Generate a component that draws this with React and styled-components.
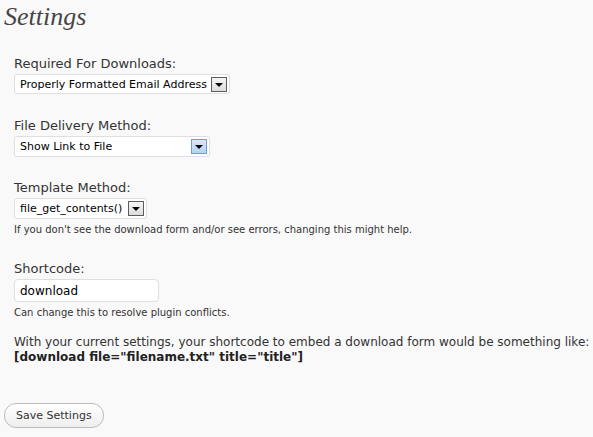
import React from "react";
import styled, { createGlobalStyle } from "styled-components";

const Global = createGlobalStyle`
html, body {
  margin: 0;
  background: #f9f9f9;
}
body {
  font-family: "DejaVu Sans", Verdana, sans-serif;
  color: #333;
}
`

const Page = styled.div`
padding: 0 4px;
width: 593px;
height: 437px;
box-sizing: border-box;
overflow: hidden;
`

const Title = styled.h2`
margin: 0;
padding-top: 2px;
font-family: "Liberation Serif", Georgia, serif;
font-style: italic;
font-weight: normal;
font-size: 26px;
line-height: 29px;
color: #464646;
`

const Form = styled.div`
padding-left: 10px;
display: flex;
flex-direction: column;
`

const Field = styled.div`
margin-top: ${p => p.$top}px;
display: flex;
flex-direction: column;
align-items: flex-start;
`

const Label = styled.label`
font-size: 13px;
line-height: 16px;
color: #333;
margin-bottom: 2px;
`

const Select = styled.div`
display: flex;
align-items: center;
height: ${p => p.$height}px;
width: ${p => p.$width}px;
box-sizing: border-box;
background: #fff;
border: 1px solid #dfdfdf;
border-radius: 3px;
padding: 0 2px 0 5px;
font-size: 11px;
color: #000;
`

const SelectText = styled.span`
flex: 1;
white-space: nowrap;
overflow: hidden;
`

const Arrow = styled.span`
width: 16px;
height: 15px;
box-sizing: border-box;
display: flex;
align-items: center;
justify-content: center;
border: 1px solid ${p => (p.$active ? "#6d9fd6" : "#5c5c5c")};
background: ${p => (p.$active ? "linear-gradient(#d7e8fa, #b6d3f2)" : "linear-gradient(#f5f5f5, #dcdcdc)")};
&::after {
  content: "";
  border-left: 4px solid transparent;
  border-right: 4px solid transparent;
  border-top: 4px solid #000;
  margin-top: 1px;
}
`

const Help = styled.p`
margin: 4px 0 0;
font-size: 10px;
line-height: 13px;
color: #333;
`

const Input = styled.div`
width: 145px;
height: 23px;
box-sizing: border-box;
background: #fff;
border: 1px solid #dfdfdf;
border-radius: 4px;
padding: 0 5px;
display: flex;
align-items: center;
font-size: 12px;
color: #000;
`

const Note = styled.p`
margin: 16px 0 0;
font-size: 12px;
line-height: 15px;
white-space: nowrap;
`

const Code = styled.strong`
display: block;
font-weight: bold;
color: #222;
`

const Button = styled.button`
margin-top: 38px;
font-family: "DejaVu Sans", Verdana, sans-serif;
font-size: 11px;
color: #333;
height: 25px;
padding: 0 11px;
background: linear-gradient(#fff, #eee);
border: 1px solid #bbb;
border-radius: 12px;
cursor: pointer;
`

export default function App() {
  return (
    <Page>
      <Global />
      <Title>Settings</Title>
      <Form>
        <Field $top={25}>
          <Label>Required For Downloads:</Label>
          <Select $width={216} $height={20}>
            <SelectText>Properly Formatted Email Address</SelectText>
            <Arrow />
          </Select>
        </Field>
        <Field $top={24}>
          <Label>File Delivery Method:</Label>
          <Select $width={196} $height={21}>
            <SelectText>Show Link to File</SelectText>
            <Arrow $active />
          </Select>
        </Field>
        <Field $top={23}>
          <Label>Template Method:</Label>
          <Select $width={133} $height={21}>
            <SelectText>file_get_contents()</SelectText>
            <Arrow />
          </Select>
          <Help>If you don't see the download form and/or see errors, changing this might help.</Help>
        </Field>
        <Field $top={25}>
          <Label>Shortcode:</Label>
          <Input>download</Input>
          <Help>Can change this to resolve plugin conflicts.</Help>
        </Field>
        <Note>
          With your current settings, your shortcode to embed a download form would be something like:
          <Code>[download file="filename.txt" title="title"]</Code>
        </Note>
      </Form>
      <div>
        <Button>Save Settings</Button>
      </div>
    </Page>
  );
}
